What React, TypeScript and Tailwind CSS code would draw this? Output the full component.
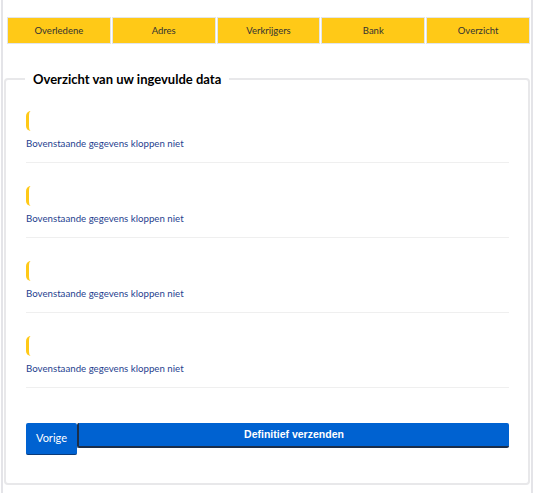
import React from 'react'

const tabs = ['Overledene', 'Adres', 'Verkrijgers', 'Bank', 'Overzicht']

function SummaryRow() {
  return (
    <div className="border-b border-[#efefef] pt-[23px] pb-[12px]">
      <div className="w-[6px] h-[20px] border-l-[3px] border-[#ffc917] rounded-l-[5px]" />
      <a className="block mt-[5px] text-[9.7px] leading-[14px] text-[#1f3f8f] cursor-pointer">
        Bovenstaande gegevens kloppen niet
      </a>
    </div>
  )
}

export default function App() {
  return (
    <div className="w-[534px] h-[493px] bg-white pl-[1px] font-['Lato',sans-serif]">
      <div className="w-[532px] h-full border-x-2 border-[#e4e4e8] pl-[4px] pr-[1px] pt-[17px]">
        <nav className="flex gap-[1px] w-[523px]">
          {tabs.map(t => (
            <div
              key={t}
              className="flex-1 h-[27px] border border-[#e2e5ea] bg-[#ffc917] flex items-center justify-center pt-[2px] text-[9.5px] text-[#333]"
            >
              {t}
            </div>
          ))}
        </nav>

        <fieldset className="mt-[27px] ml-[-3px] w-[526px] h-[414px] border-2 border-[#e8e8ea] rounded-[4px] pl-[20px] pr-[19px]">
          <legend className="ml-[-1px] px-[8px] text-[13px] font-bold text-black leading-[16px]">
            Overzicht van uw ingevulde data
          </legend>

          <div className="mt-[1px]">
            <SummaryRow />
            <SummaryRow />
            <SummaryRow />
            <SummaryRow />
          </div>

          <div className="flex items-start mt-[35px]">
            <button className="w-[51px] h-[32px] bg-[#0062d1] rounded-[2px] border-b border-[#0b3a78] text-white text-[11px]">
              Vorige
            </button>
            <button className="flex-1 h-[25px] bg-[#0062d1] rounded-[2px] border-l-2 border-b-2 border-[#1b2e4a] text-white text-[10.5px] font-bold font-['Liberation_Sans',sans-serif]">
              Definitief verzenden
            </button>
          </div>
        </fieldset>
      </div>
    </div>
  )
}
